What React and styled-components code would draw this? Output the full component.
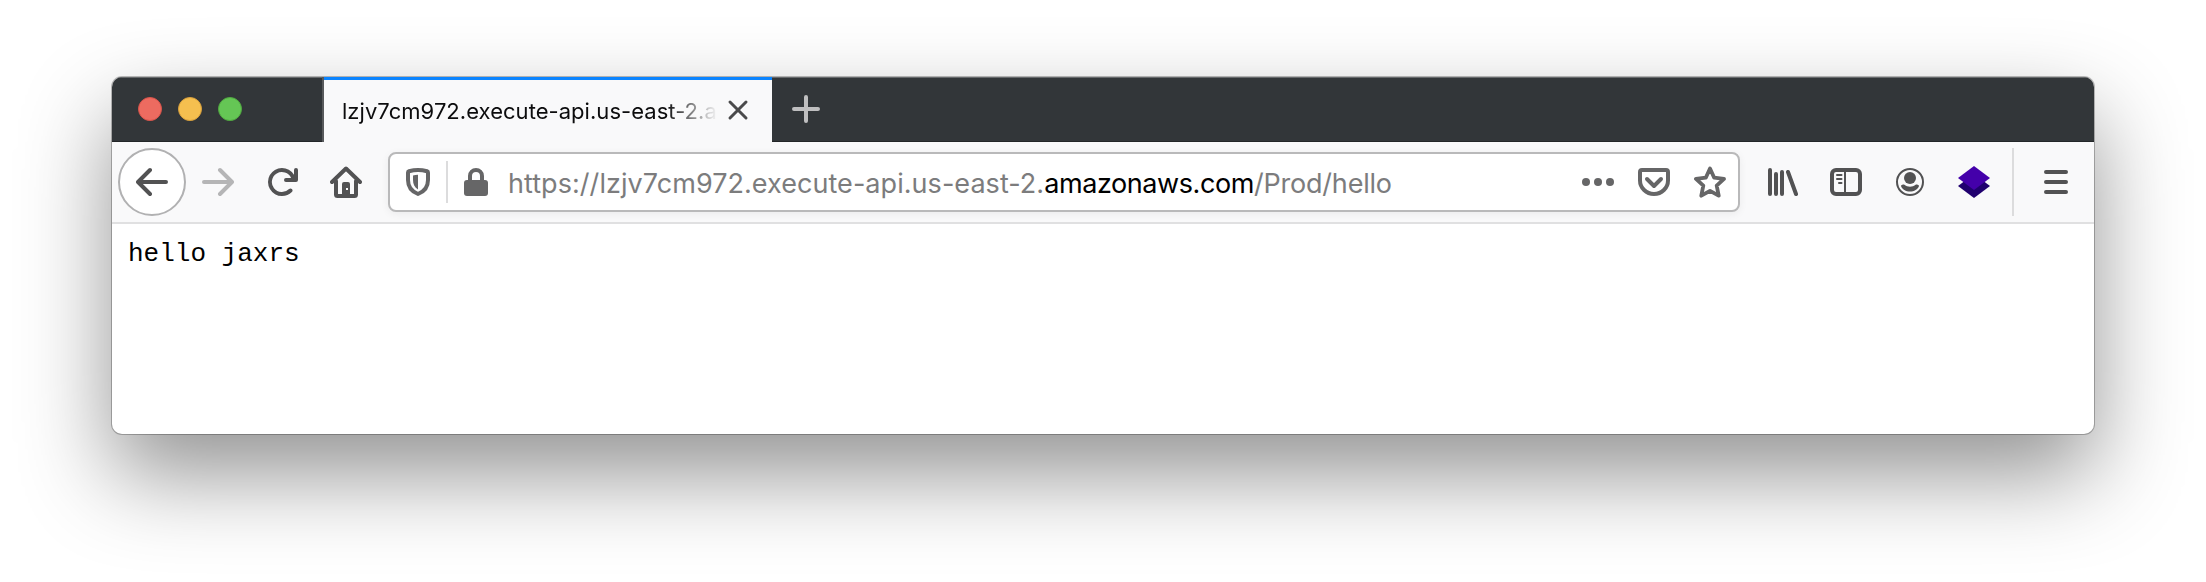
import React from 'react';
import styled, { createGlobalStyle } from 'styled-components';

const GlobalStyle = createGlobalStyle`
  * { box-sizing: border-box; }
  body { margin: 0; background: #fff; overflow: hidden; }
`;

const Desktop = styled.main`
  height: 582px;
  padding: 77px 112px 148px;
  overflow: hidden;
  font-family: Inter, 'Liberation Sans', sans-serif;
`;

const BrowserWindow = styled.section`
  display: flex;
  flex-direction: column;
  height: 357px;
  border-radius: 10px;
  overflow: hidden;
  background: #fff;
  box-shadow: 0 0 0 1px rgba(0, 0, 0, 0.25), 0 40px 90px rgba(0, 0, 0, 0.43);
`;

const TabBar = styled.header`
  display: flex;
  flex: none;
  height: 65px;
  background: #323639;
  box-shadow: inset 0 1px #66696b, inset 0 -1px #232628;
`;

const WindowControls = styled.div`
  display: flex;
  align-items: center;
  gap: 16px;
  width: 212px;
  padding: 0 0 1px 26px;
  border-right: 2px solid #57595b;
`;

const ControlDot = styled.span`
  width: 24px;
  height: 24px;
  border-radius: 50%;
  background: ${(p) => p.$fill};
  border: 1px solid ${(p) => p.$edge};
`;

const Tab = styled.div`
  display: flex;
  align-items: center;
  width: 448px;
  padding: 0 18px 0 18px;
  background: #f9f9fa;
  border-top: 3px solid #0a84ff;
`;

const TabTitle = styled.div`
  width: 376px;
  margin-right: 4px;
  white-space: nowrap;
  font-size: 22px;
  line-height: 32px;
  letter-spacing: 0.04px;
  color: #0c0c0d;
  mask-image: linear-gradient(to left, transparent, #000 52px);
`;

const NewTab = styled.button`
  display: flex;
  align-items: center;
  justify-content: center;
  width: 68px;
  padding: 0 0 1px;
  border: 0;
  background: none;
`;

const Toolbar = styled.nav`
  display: flex;
  align-items: center;
  flex: none;
  height: 82px;
  padding-left: 6px;
  background: #f9f9fa;
  border-bottom: 2px solid #e0e0e1;
`;

const ToolButton = styled.button`
  display: flex;
  align-items: center;
  justify-content: center;
  flex: none;
  width: 64px;
  height: 64px;
  padding: 0;
  border: 0;
  background: none;
  color: ${(p) => (p.$dim ? '#b5b5b6' : '#525253')};
`;

const BackButton = styled(ToolButton)`
  width: 68px;
  height: 68px;
  border: 2px solid #b1b1b2;
  border-radius: 50%;
  background: #fff;
`;

const AddressBar = styled.div`
  display: flex;
  align-items: center;
  flex: none;
  width: 1352px;
  height: 60px;
  margin: 0 10px;
  padding: 0 0 0 12px;
  border: 2px solid #b9b9ba;
  border-radius: 8px;
  background: #fff;
  box-shadow: 0 2px 8px rgba(0, 0, 0, 0.06);
  color: #666667;
`;

const AddressIcon = styled.span`
  display: flex;
  justify-content: center;
  flex: none;
  width: ${(p) => p.$width}px;
`;

const Separator = styled.span`
  flex: none;
  width: 2px;
  height: ${(p) => p.$height}px;
  margin: ${(p) => p.$margin};
  background: #dcdcdd;
`;

const Url = styled.span`
  flex: 1;
  margin-left: 16px;
  padding-top: 3px;
  white-space: nowrap;
  font-size: 27px;
  line-height: 40px;
  letter-spacing: 0.05px;
  color: #7c7c7d;
`;

const Domain = styled.span`
  letter-spacing: -0.42px;
  color: #000;
`;

const UrlPath = styled.span`
  letter-spacing: -0.2px;
`;

const Page = styled.pre`
  margin: 0;
  padding: 15px 16px;
  font-family: 'Liberation Mono', monospace;
  font-size: 26px;
  line-height: 30px;
  color: #000;
`;

const Icon = ({ size = 32, children }) => (
  <svg width={size} height={size} viewBox="0 0 32 32" fill="none" stroke="currentColor"
    strokeWidth="4" strokeLinecap="round" strokeLinejoin="round">
    {children}
  </svg>
);

const BackIcon = () => <Icon><path d="M30 16H2.5M14 4L2 16l12 12" /></Icon>;
const ForwardIcon = () => <Icon><path d="M2 16h27.500M18 4l12 12-12 12" /></Icon>;
const ReloadIcon = () => (
  <Icon>
    <path fill="currentColor" stroke="none" transform="scale(2)" d="M15 1a1 1 0 0 0-1 1v2.418A6.995 6.995 0 1 0 8 15a6.954 6.954 0 0 0 4.950-2.050 1 1 0 0 0-1.414-1.414A5.019 5.019 0 1 1 12.549 6H10a1 1 0 0 0 0 2h5a1 1 0 0 0 1-1V2a1 1 0 0 0-1-1z" />
  </Icon>
);
const HomeIcon = () => (
  <Icon>
    <path d="M2 16L16 2.500 30 16M6 15v13.500a1.500 1.500 0 0 0 1.500 1.500h17a1.500 1.500 0 0 0 1.500-1.500V15" />
    <path fill="currentColor" stroke="none" fillRule="evenodd" d="M12 30V18a2 2 0 0 1 2-2h4a2 2 0 0 1 2 2v12zM16 22v2h2v-2z" />
  </Icon>
);
const ShieldIcon = () => (
  <Icon>
    <path d="M16 4c-3 0-6 .4-9 1.200a1.500 1.500 0 0 0-1 1.500V14c0 6.500 3.500 11.500 10 14 6.500-2.500 10-7.500 10-14V6.700a1.500 1.500 0 0 0-1-1.500C22 4.400 19 4 16 4z" />
    <path fill="currentColor" stroke="none" d="M16 8.800c-2 .1-3.500.4-5 .8V14c0 4.300 1.600 7.400 5 9.500z" />
  </Icon>
);
const LockIcon = () => (
  <Icon>
    <path d="M10 15v-5a6 6 0 0 1 12 0v5" />
    <rect x="4" y="14" width="24" height="16" rx="3" fill="currentColor" stroke="none" />
  </Icon>
);
const MoreIcon = () => (
  <Icon>
    <g fill="currentColor" stroke="none">
      <circle cx="4" cy="16" r="4" /><circle cx="16" cy="16" r="4" /><circle cx="28" cy="16" r="4" />
    </g>
  </Icon>
);
const PocketIcon = () => (
  <Icon>
    <path d="M4 4h24a2 2 0 0 1 2 2v8.500a14 13.500 0 0 1-28 0V6a2 2 0 0 1 2-2z" />
    <path d="M9 13l7 7 7-7" />
  </Icon>
);
const StarIcon = () => (
  <Icon>
    <path strokeWidth="3.800" d="M16 2.500l4.200 9.200 9.800 1.200-7.300 6.700 2 10.100L16 24.800l-8.700 4.900 2-10.100L2 12.900l9.800-1.200z" />
  </Icon>
);
const LibraryIcon = () => (
  <Icon>
    <path d="M4 4v24M10 8v20M16 6v22M22 6l8 22" />
  </Icon>
);
const SidebarIcon = () => (
  <Icon>
    <rect x="2" y="4" width="28" height="24" rx="4" />
    <path strokeWidth="2" strokeLinecap="butt" d="M15 4v24" />
    <path strokeWidth="2" d="M7 9h4.500M7 13h4.500M9 17h2.500" />
  </Icon>
);
const AccountIcon = () => (
  <Icon>
    <circle cx="16" cy="16" r="13" strokeWidth="2" />
    <circle cx="16" cy="12" r="6" fill="currentColor" stroke="none" />
    <path fill="currentColor" stroke="none" d="M10 18.500c4 3 8 3 12 0 1.500 0 3 .5 3 1.500-1 3.500-5 5.500-9 5.500S8 23.500 7 20c0-1 1.500-1.500 3-1.500z" />
  </Icon>
);
const LayersIcon = () => (
  <Icon>
    <path fill="#20006e" stroke="none" d="M16 8l16 12-16 12L0 20z" />
    <path fill="#4400aa" stroke="none" d="M16 0l16 12-16 12L0 12z" />
  </Icon>
);
const MenuIcon = () => <Icon><path d="M6 6h20M6 16h20M6 26h20" /></Icon>;
const CloseIcon = () => (
  <Icon><path stroke="#4a4a4b" strokeWidth="3" d="M8 7l16 16M24 7L8 23" /></Icon>
);
const PlusIcon = () => (
  <Icon><path stroke="#bfbfc0" d="M16 4v24M4 16h24" /></Icon>
);

export default function App() {
  return (
    <>
      <GlobalStyle />
      <Desktop>
        <BrowserWindow>
          <TabBar>
            <WindowControls>
              <ControlDot $fill="#ed6b60" $edge="#d9534a" />
              <ControlDot $fill="#f5bf4f" $edge="#d9a03c" />
              <ControlDot $fill="#65c655" $edge="#50a940" />
            </WindowControls>
            <Tab>
              <TabTitle>lzjv7cm972.execute-api.us-east-2.a</TabTitle>
              <CloseIcon />
            </Tab>
            <NewTab aria-label="New tab"><PlusIcon /></NewTab>
          </TabBar>
          <Toolbar>
            <BackButton aria-label="Back"><BackIcon /></BackButton>
            <ToolButton $dim aria-label="Forward"><ForwardIcon /></ToolButton>
            <ToolButton aria-label="Reload"><ReloadIcon /></ToolButton>
            <ToolButton aria-label="Home"><HomeIcon /></ToolButton>
            <AddressBar>
              <AddressIcon $width={32}><ShieldIcon /></AddressIcon>
              <Separator $height={42} $margin="0 12px" />
              <AddressIcon $width={32}><LockIcon /></AddressIcon>
              <Url>
                https://lzjv7cm972.execute-api.us-east-2.<Domain>amazonaws.com</Domain><UrlPath>/Prod/hello</UrlPath>
              </Url>
              <AddressIcon $width={56}><MoreIcon /></AddressIcon>
              <AddressIcon $width={56}><PocketIcon /></AddressIcon>
              <AddressIcon $width={56}><StarIcon /></AddressIcon>
            </AddressBar>
            <ToolButton aria-label="Library"><LibraryIcon /></ToolButton>
            <ToolButton aria-label="Sidebar"><SidebarIcon /></ToolButton>
            <ToolButton aria-label="Account"><AccountIcon /></ToolButton>
            <ToolButton aria-label="Extension"><LayersIcon /></ToolButton>
            <Separator $height={68} $margin="0 10px 0 6px" />
            <ToolButton aria-label="Menu"><MenuIcon /></ToolButton>
          </Toolbar>
          <Page>hello jaxrs</Page>
        </BrowserWindow>
      </Desktop>
    </>
  );
}
